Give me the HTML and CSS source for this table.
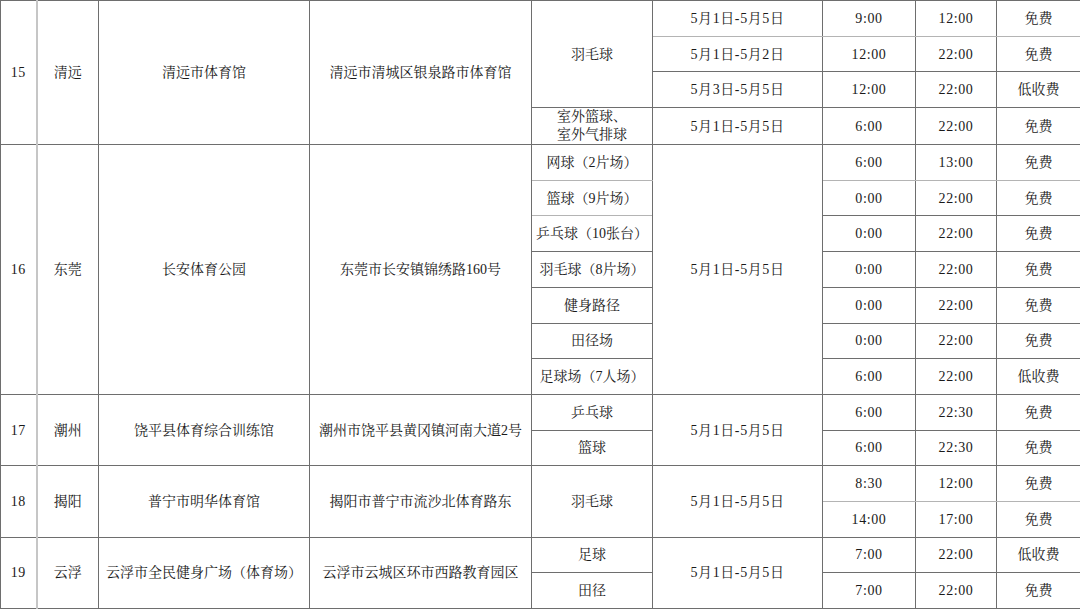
FILE: index.html
```html
<!DOCTYPE html>
<html lang="zh-CN">
<head>
<meta charset="utf-8">
<link rel="stylesheet" href="styles.css">
</head>
<body>
<table class="sched">
<colgroup>
<col class="c-no"><col class="c-city"><col class="c-venue"><col class="c-addr"><col class="c-sport"><col class="c-date"><col class="c-start"><col class="c-end"><col class="c-fee">
</colgroup>
<tbody>
<tr><td rowspan="4" class="num">15</td><td rowspan="4" class="city">清远</td><td rowspan="4">清远市体育馆</td><td rowspan="4">清远市清城区银泉路市体育馆</td><td rowspan="3">羽毛球</td><td class="num soft-b">5月1日-5月5日</td><td class="num soft-b">9:00</td><td class="num soft-b">12:00</td><td class="soft-b">免费</td></tr>
<tr><td class="num">5月1日-5月2日</td><td class="num">12:00</td><td class="num">22:00</td><td>免费</td></tr>
<tr><td class="num">5月3日-5月5日</td><td class="num">12:00</td><td class="num">22:00</td><td>低收费</td></tr>
<tr><td class="two">室外篮球、<br>室外气排球</td><td class="num">5月1日-5月5日</td><td class="num">6:00</td><td class="num">22:00</td><td>免费</td></tr>

<tr><td rowspan="7" class="num">16</td><td rowspan="7" class="city">东莞</td><td rowspan="7">长安体育公园</td><td rowspan="7">东莞市长安镇锦绣路160号</td><td class="soft-b">网球（2片场）</td><td rowspan="7" class="num">5月1日-5月5日</td><td class="num soft-b">6:00</td><td class="num soft-b">13:00</td><td class="soft-b">免费</td></tr>
<tr><td class="soft-b">篮球（9片场）</td><td class="num">0:00</td><td class="num">22:00</td><td>免费</td></tr>
<tr><td>乒乓球（10张台）</td><td class="num">0:00</td><td class="num">22:00</td><td>免费</td></tr>
<tr><td>羽毛球（8片场）</td><td class="num">0:00</td><td class="num">22:00</td><td>免费</td></tr>
<tr><td>健身路径</td><td class="num">0:00</td><td class="num">22:00</td><td>免费</td></tr>
<tr><td>田径场</td><td class="num">0:00</td><td class="num">22:00</td><td>免费</td></tr>
<tr><td>足球场（7人场）</td><td class="num">6:00</td><td class="num">22:00</td><td>低收费</td></tr>

<tr><td rowspan="2" class="num">17</td><td rowspan="2" class="city">潮州</td><td rowspan="2">饶平县体育综合训练馆</td><td rowspan="2">潮州市饶平县黄冈镇河南大道2号</td><td>乒乓球</td><td rowspan="2" class="num">5月1日-5月5日</td><td class="num">6:00</td><td class="num">22:30</td><td>免费</td></tr>
<tr><td>篮球</td><td class="num">6:00</td><td class="num">22:30</td><td>免费</td></tr>

<tr><td rowspan="2" class="num">18</td><td rowspan="2" class="city">揭阳</td><td rowspan="2">普宁市明华体育馆</td><td rowspan="2">揭阳市普宁市流沙北体育路东</td><td rowspan="2">羽毛球</td><td rowspan="2" class="num">5月1日-5月5日</td><td class="num soft-b">8:30</td><td class="num soft-b">12:00</td><td class="soft-b">免费</td></tr>
<tr><td class="num">14:00</td><td class="num">17:00</td><td>免费</td></tr>

<tr><td rowspan="2" class="num">19</td><td rowspan="2" class="city">云浮</td><td rowspan="2">云浮市全民健身广场（体育场）</td><td rowspan="2">云浮市云城区环市西路教育园区</td><td>足球</td><td rowspan="2" class="num">5月1日-5月5日</td><td class="num">7:00</td><td class="num">22:00</td><td>低收费</td></tr>
<tr><td>田径</td><td class="num">7:00</td><td class="num">22:00</td><td>免费</td></tr>
</tbody>
</table>
</body>
</html>
```

FILE: styles.css
```css
html, body {
  margin: 0;
  padding: 0;
  background: #ffffff;
}

.sched {
  width: 1080px;
  border-collapse: collapse;
  table-layout: fixed;
  font-family: "Liberation Serif", "Noto Serif CJK SC", "Noto Sans CJK SC", serif;
  font-size: 14px;
  color: #1a1a1a;
}

.c-no { width: 36px; }
.c-city { width: 62px; }
.c-venue { width: 211px; }
.c-addr { width: 222px; }
.c-sport { width: 121px; }
.c-date { width: 170px; }
.c-start { width: 93px; }
.c-end { width: 81px; }
.c-fee { width: 84px; }

.sched tr {
  height: 35.7px;
}

.sched td {
  border: 1px solid #6e6e6e;
  padding: 0;
  text-align: center;
  vertical-align: middle;
  line-height: 17px;
  white-space: nowrap;
  overflow: hidden;
}

.sched td.num {
  letter-spacing: 0.6px;
}

.sched td.city {
  border-left: 2px solid #c6c6c6;
}

.sched td.soft-b {
  border-bottom: 1px solid #b4b4b4;
}

.sched td.two {
  line-height: 18px;
}
```
